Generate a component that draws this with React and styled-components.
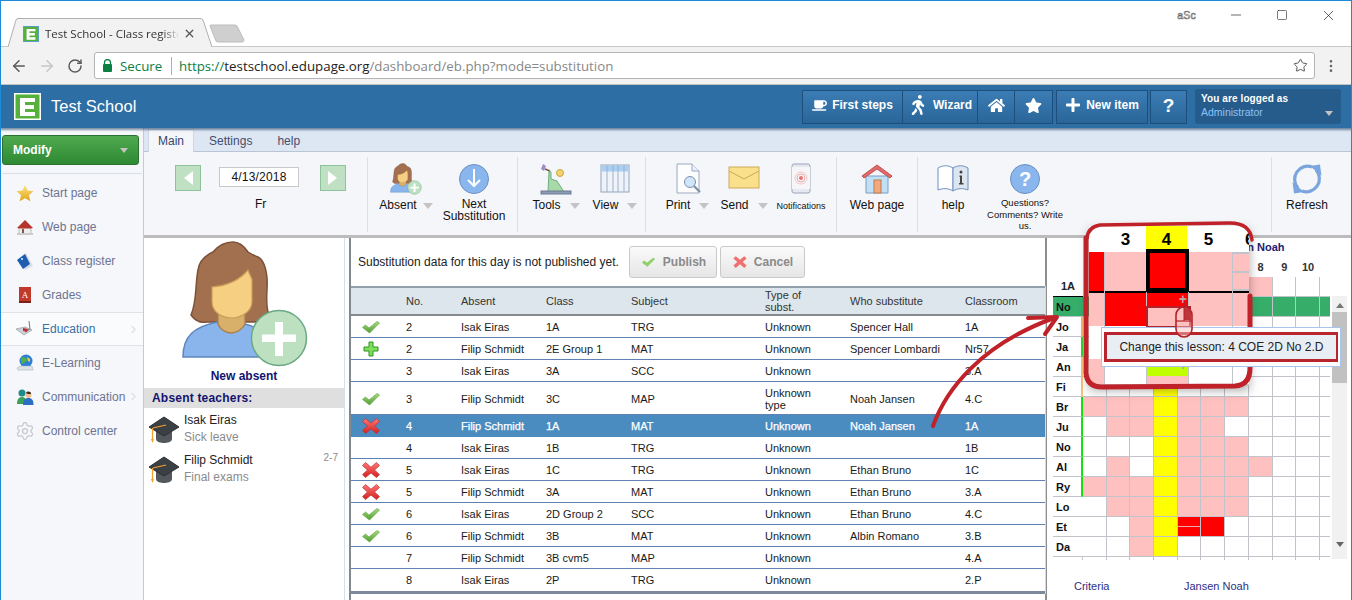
import React from 'react';
import styled, { createGlobalStyle, css } from 'styled-components';
import { ArrowLeft, ArrowRight, RotateCw, Star, MoreVertical, Minus, Square, X, Settings, ChevronRight } from 'lucide-react';
import { FaCoffee, FaHome, FaStar, FaPlus, FaWalking } from 'react-icons/fa';

const Global = createGlobalStyle`
  html, body { margin: 0; padding: 0; background: #fff; overflow: hidden; }
  * { box-sizing: border-box; }
  body { font-family: "Liberation Sans", Arial, sans-serif; font-size: 12px; color: #111; }
`;

const Frame = styled.div`
  position: relative; width: 1352px; height: 600px; overflow: hidden; display: flex; flex-direction: column;
  &::after { content: ''; position: absolute; inset: 0; border: 1px solid #1b8bd6; border-bottom: 0; border-top-width: 1px; pointer-events: none; z-index: 50; }
`;

/* ---------- browser chrome ---------- */
const TabStrip = styled.div`
  height: 47px; flex: none; display: flex; align-items: flex-end; padding-left: 8px; background: #fff; position: relative; border-bottom: 1px solid #c8c8c8;
`;
const Tab = styled.div`
  position: relative; width: 204px; height: 29px; margin-bottom: -1px; display: flex; align-items: center; padding: 2px 0 0 15px; z-index: 1;
`;
const TabShape = styled.svg`position: absolute; inset: 0; width: 204px; height: 29px; z-index: -1;`;
const TabTitle = styled.span`
  font: 11.500px "Open Sans", "Noto Sans", sans-serif; color: #333; margin-left: 6px; width: 134px; white-space: nowrap; overflow: hidden;
  -webkit-mask-image: linear-gradient(90deg, #000 88%, transparent);
`;
const TabClose = styled(X)`margin-left: 4px; color: #555;`;
const NewTab = styled.svg`width: 36px; height: 19px; margin: 0 0 3px -3px;`;
const WinControls = styled.div`
  position: absolute; top: 5px; right: 1px; display: flex; align-items: center; height: 20px; color: #222;
`;
const Asc = styled.span`font: 10.500px "Liberation Sans", sans-serif; color: #fff; -webkit-text-stroke: 0.6px #666; margin-right: 17px; letter-spacing: .2px;`;
const WinBtn = styled.span`width: 46px; display: flex; justify-content: center;`;

const Toolbar = styled.div`
  height: 38px; flex: none; background: #f2f2f2; border-bottom: 1px solid #c3c3c3; display: flex; align-items: center; padding-left: 5px;
`;
const NavBtn = styled.span`width: 28px; display: flex; justify-content: center; color: ${p => p.$off ? '#c6c6c6' : '#5a5a5a'};`;
const Address = styled.div`
  margin-left: 5px; width: 1221px; height: 27px; background: #fff; border: 1px solid #b4b4b4; border-radius: 3px; display: flex; align-items: center; padding: 0 6px 0 7px;
  font: 14px "Open Sans", "Noto Sans", sans-serif;
`;
const Secure = styled.span`color: #0b8043; margin-left: 7px; width: 51px; font-size: 13.300px;`;
const UrlSep = styled.span`width: 1px; height: 18px; background: #b0b0b0; margin-right: 7px;`;
const Url = styled.span`color: #0b8043; white-space: nowrap; flex: 1; font-size: 13.300px;`;
const UrlHost = styled.span`color: #222;`;
const UrlPath = styled.span`color: #888;`;
const Kebab = styled.span`margin-left: 8px; color: #666; display: flex;`;

/* ---------- blue header ---------- */
const Header = styled.header`
  height: 43px; flex: none; background: #2d6ea4; display: flex; align-items: center; padding: 0 11px 0 14px; box-shadow: 0 2px 2px rgba(0,40,80,.5); position: relative; z-index: 3;
`;
const Logo = styled.svg`width: 27px; height: 27px; flex: none;`;
const SchoolName = styled.div`color: #fff; font-size: 16.500px; margin-left: 10px; flex: 1;`;
const HeadGroup = styled.div`display: flex; margin-left: ${p => p.$gap || 0}px;`;
const HeadBtn = styled.div`
  width: ${p => p.$w}px; height: 34px; display: flex; align-items: center; justify-content: center; gap: 5px; padding-bottom: 3px;
  background: linear-gradient(#3b7db5, #2a6598); border: 1px solid #1e4f7c; margin-left: -1px; color: #fff; font-weight: bold; font-size: 12px;
`;
const HeadQ = styled.span`font-size: 19px; line-height: 19px;`;
const Login = styled.div`
  width: 146px; height: 35px; margin-left: 8px; background: #255c8b; border-radius: 3px; padding: 3px 6px; position: relative; line-height: 14px; font-size: 10px;
  color: #fff; font-weight: bold; letter-spacing: .1px;
`;
const LoginName = styled.div`color: #8ec2f5; font-weight: normal; font-size: 10.500px; line-height: 13px; letter-spacing: 0;`;
const Caret = styled.span`
  display: inline-block; border-left: ${p => p.$s || 4}px solid transparent; border-right: ${p => p.$s || 4}px solid transparent; border-top: ${p => (p.$s || 4) + 1}px solid ${p => p.$c || '#c4c4c4'};
`;
const LoginCaret = styled(Caret)`position: absolute; right: 8px; bottom: 8px;`;

/* ---------- body ---------- */
const Body = styled.div`flex: 1; display: flex; min-height: 0;`;
const Sidebar = styled.nav`width: 144px; flex: none; background: #f5f7fa; border-right: 1px solid #c6cbd2; padding-top: 7px;`;
const ModifyBtn = styled.div`
  margin-left: 2px; width: 137px; height: 30px; border-radius: 3px; border: 1px solid #2a7030; background: linear-gradient(#4fa94f, #2d8a33);
  color: #fff; font-weight: bold; font-size: 12px; display: flex; align-items: center; justify-content: space-between; padding: 0 10px 0 10px;
`;
const SideDivider = styled.div`height: 1px; background: #d8dfe6; margin: 8px 1px 2px 2px;`;
const SideItem = styled.div`
  height: 34px; display: flex; align-items: center; padding-left: 15px; color: #6d7392; font-size: 12px; position: relative;
  ${p => p.$active && css`background: #fafbfc; color: #3a6fa5; border-top: 1px solid #dfe3e8; border-bottom: 1px solid #dfe3e8;`}
`;
const SideIcon = styled.svg`width: 20px; height: 20px; flex: none; margin-right: 7px;`;
const Chevron = styled(ChevronRight)`position: absolute; right: 3px; top: 10px; color: #dcdfe3;`;

const Main = styled.div`flex: 1; display: flex; flex-direction: column; min-width: 0;`;
const RibbonTabs = styled.div`height: 24px; flex: none; background: #dde6f3; border-bottom: 1px solid #b9c4d4; display: flex; padding-left: 4px; align-items: flex-end;`;
const RibbonTab = styled.div`
  height: 23px; margin-bottom: -1px; padding: 0 ${p => p.$pad}px; display: flex; align-items: center; color: #444e6e; font-size: 12px;
  ${p => p.$active && css`background: #f5f6f9; border: 1px solid #cfd7e3; border-bottom: 0; color: #33466e;`}
`;
const Ribbon = styled.div`height: 86px; flex: none; background: #f5f6f9; border-bottom: 3px solid #bcbcbc; display: flex; padding: 5px 0 0;`;
const RGroup = styled.div`
  width: ${p => p.$w}px; flex: none; height: 75px; display: flex; padding-left: ${p => p.$pad || 0}px;
  border-right: ${p => p.$last ? 0 : '1px solid #dedfe3'};
`;
const DateGroup = styled.div`display: grid; grid-template-columns: 44px 101px 26px; padding: 8px 0 0 31px; justify-items: start; align-content: start;`;
const DateArrow = styled.div`width: 26px; height: 26px; background: #bfe0c2; border: 1px solid #8dc29a; display: flex; align-items: center; justify-content: center;`;
const DateBox = styled.div`width: 80px; height: 20px; margin-top: 2px; background: #fff; border: 1px solid #c9c9c9; text-align: center; line-height: 18px; font-size: 12px; letter-spacing: .2px;`;
const DayLabel = styled.div`grid-column: 2; margin: 6px 0 0 36px; font-size: 12px;`;
const RItem = styled.div`width: ${p => p.$w}px; flex: none; display: flex; flex-direction: column; align-items: center; padding-top: 6px;`;
const RIcon = styled.svg`width: 34px; height: 32px; flex: none;`;
const RLabel = styled.div`
  margin-top: ${p => p.$mt ?? 5}px; font-size: ${p => p.$fs || 12}px; line-height: ${p => p.$lh || 11}px; text-align: center; color: #111; display: flex; align-items: center; gap: ${p => p.$gap || 9}px; white-space: nowrap;
  ${p => p.$block && 'display: block;'}
`;
const Spacer = styled.div`flex: 1;`;

const Content = styled.div`flex: 1; display: flex; min-height: 0;`;
const LeftPanel = styled.aside`width: 201px; flex: none; border-right: 1px solid #d5dfe8; display: flex; flex-direction: column;`;
const BigAvatar = styled.svg`width: 130px; height: 128px; margin: 2px 0 0 36px; flex: none;`;
const NewAbsent = styled.div`text-align: center; font-weight: bold; color: #14146e; font-size: 12px; line-height: 14px; margin-top: 1px;`;
const AbsentHead = styled.div`height: 20px; margin-top: 5px; background: #dfdfdf; color: #14146e; font-weight: bold; padding-left: 8px; line-height: 20px; font-size: 12px; letter-spacing: .2px;`;
const Teacher = styled.div`height: 40px; display: flex; padding: 4px 0 0 4px; position: relative;`;
const Hat = styled.svg`width: 32px; height: 30px; margin-top: 3px; flex: none;`;
const TeacherText = styled.div`margin-left: 4px; line-height: 17px; font-size: 12px; color: #222;`;
const Reason = styled.div`color: #8b8b8b;`;
const Range = styled.span`position: absolute; right: 6px; top: 4px; font-size: 10px; color: #8b8b8b;`;

const Center = styled.section`width: 702px; flex: none; padding-left: 4px; display: flex; flex-direction: column; border-right: 2px solid #8e8e8e;`;
const CenterInner = styled.div`flex: 1; border-left: 2px solid #808890; padding-left: 0; display: flex; flex-direction: column;`;
const PublishBar = styled.div`height: 48px; flex: none; display: flex; align-items: flex-start; padding: 8px 0 0 7px; font-size: 12px; color: #222;`;
const PublishText = styled.span`line-height: 32px; width: 271px;`;
const GreyBtn = styled.div`
  width: ${p => p.$w}px; height: 32px; margin-right: 3px; display: flex; align-items: center; justify-content: center; gap: 6px;
  border: 1px solid #c9c9c9; border-radius: 3px; background: linear-gradient(#fafafa, #e6e6e6); color: #8a8a8a; font-weight: bold; font-size: 12px;
`;
const Table = styled.table`width: 694px; table-layout: fixed; border-collapse: separate; border-spacing: 0; font-size: 11px; border-right: 1px solid #cfdbe6;`;
const Th = styled.th`
  height: 30px; background: #dde6ec; font-weight: normal; text-align: left; padding: 0; line-height: 12px; color: #333; border-top: 2px solid #92a0ac; border-bottom: 2px solid #858a8e;
`;
const Td = styled.td`
  padding: ${p => p.$h === 33 ? '2px' : '0'} 0 0; height: ${p => p.$h}px; line-height: 12px; color: ${p => p.$sel ? '#fff' : '#1a1a1a'};
  ${p => p.$sel && '-webkit-text-stroke: 0.25px #fff;'}
  background: ${p => p.$sel ? '#4a8bc0' : '#fff'}; border-bottom: ${p => p.$last ? '3px solid #7c8a9c' : p.$sel ? '0' : '1px solid #5f82b2'};
  text-align: left;
`;
const StatusIcon = styled.svg`display: block; width: 20px; height: 18px; margin: 0 0 0 10px;`;

const RightPanel = styled.section`flex: 1; padding-left: 6px; position: relative;`;
const PlanTitle = styled.div`height: 19px; padding: 3px 0 0 163px; font-weight: bold; color: #22226e; font-size: 11px; white-space: nowrap;`;
const PlanWrap = styled.div`display: flex; align-items: flex-start;`;
const Plan = styled.div`width: 277px; overflow: hidden; flex: none;`;
const PlanRow = styled.div`display: grid; grid-template-columns: 30px repeat(11, 23.7px); grid-template-rows: ${p => p.$h || 20}px; height: ${p => p.$h || 20}px; ${p => p.$black && 'border-bottom: 1px solid #000;'}`;
const RowLabel = styled.div`
  height: 20px; font-weight: bold; font-size: 11px; line-height: 21px; padding-left: 3px; color: #111; border-bottom: 1px solid #c2c2ca; position: relative;
  background: ${p => p.$green ? '#36ae6a' : 'transparent'};
  ${p => p.$ind && css`border-right: 2px solid ${p.$ind};`}
`;
const colors = { w: '#fff', p: '#ffc0c0', y: '#ffff00', r: '#ff0000', g: '#36ae6a', R: '#ff0000' };
const Cell = styled.div`
  border-right: 1px solid #c2c2ca; border-bottom: 1px solid #c2c2ca; background: ${p => colors[p.$c]};
  ${p => p.$c === 'R' && 'background: linear-gradient(#f00 47%, #eaa 47%, #eaa 53%, #f00 53%);'}
`;
const NumCell = styled.div`font-weight: bold; font-size: 11px; text-align: center; color: #333; line-height: 20px;`;
const OneA = styled.div`font-weight: bold; font-size: 11px; text-align: center; line-height: 19px; color: #222;`;
const TickCell = styled.div`height: 3px; border-right: 1px solid #c2c2ca;`;
const Scroll = styled.div`width: 15px; height: 263px; margin: 39px 0 0 2px; background: #f1f1f1; display: flex; flex-direction: column; align-items: center; padding-top: 7px; flex: none;`;
const ScrollThumb = styled.div`width: 15px; height: 71px; background: #c1c1c1; margin-top: 4px;`;
const ScrollUp = styled.div`border-left: 4px solid transparent; border-right: 4px solid transparent; border-bottom: 5px solid #777;`;
const ScrollDown = styled.div`border-left: 4px solid transparent; border-right: 4px solid transparent; border-top: 5px solid #666; margin-top: 159px;`;
const Criteria = styled.div`display: grid; grid-template-columns: 110px 1fr; padding: 19px 0 0 21px; font-size: 11px; color: #2b2f85; line-height: 15px; row-gap: 3px;`;
const CriteriaMuted = styled.span`color: #777;`;

/* ---------- annotation overlay ---------- */
const Callout = styled.div`
  position: absolute; left: 1089px; top: 226px; width: 160px; height: 160px; background: #fff; box-shadow: 0 4px 10px rgba(0,0,0,.35); z-index: 10; overflow: visible;
`;
const ZoomHead = styled.div`
  display: grid; grid-template-columns: 16px 41px 41px 43px 19px; height: 26px; font-weight: bold; font-size: 17px; text-align: center; line-height: 27px; color: #000;
`;
const ZoomHeadCell = styled.div`background: ${p => p.$y ? '#ffff00' : '#fff'}; overflow: hidden; ${p => p.$clip && 'text-align: left; padding-left: 15px;'}`;
const ZoomGrid = styled.div`
  display: grid; grid-template-columns: 15px 41px 41px 43px 16px; column-gap: 1px; background: #c2c2ca; width: 160px;
  grid-template-rows: 39px 35px 33px 17px 8px; height: 134px; row-gap: 0; position: relative;
`;
const ZCell = styled.div`
  background: ${p => ({ r: '#ff0000', p: '#ffc0c0', w: '#fff', l: '#bfff00' })[p.$c]}; position: relative;
  grid-row: ${p => p.$row}; grid-column: ${p => p.$col};
  ${p => p.$sel && 'box-shadow: 0 0 0 4px #000; outline: 0; z-index: 2; margin: 1px 3px 3px 3px;'}
  ${p => p.$top && 'border-top: 2px solid #000;'}
`;
const ZSplit = styled.div`grid-row: 1; grid-column: 5; display: grid; grid-template-rows: 1fr 1fr; row-gap: 2px; background: #c2c2ca; padding: 2px 0 2px;`;
const ZPink = styled.div`background: #ffc0c0;`;
const ZPlus = styled.span`position: absolute; right: 1px; top: -1px; font-weight: bold; font-size: 14px; color: #b9a9a9; line-height: 14px;`;
const ZRedTop = styled.div`height: 13px; background: #f00; position: relative;`;
const ZPinkOut = styled.div`height: 22px; background: #ffc0c0; border: 2px solid #b2222a; margin: 0 -3px 0 -1px; position: relative; z-index: 3;`;
const ZLime = styled.div`background: #bfff00; height: 100%; position: relative;`;
const CalloutRing = styled.svg`position: absolute; left: 1080px; top: 218px; width: 180px; height: 175px; z-index: 12; pointer-events: none;`;
const Tip = styled.div`
  position: absolute; left: 1101px; top: 327px; width: 240px; height: 40px; background: #fff; border: 1px solid #a9c5ee; padding: 4px 2px; z-index: 13;
`;
const TipInner = styled.div`
  height: 30px; background: #e9edf4; border: 3px solid #b9252c; border-left-width: 3px; border-right-width: 2px; text-align: center; line-height: 24px; font-size: 12px; color: #222; white-space: nowrap;
`;
const MouseIcon = styled.svg`position: absolute; left: 1174px; top: 300px; width: 20px; height: 38px; z-index: 14;`;
const ArrowSvg = styled.svg`position: absolute; left: 920px; top: 305px; width: 150px; height: 130px; z-index: 9; pointer-events: none;`;

/* ---------- drawings ---------- */
const ELogo = ({ size, edge = '#fff' }) => (
  <Logo viewBox="0 0 27 27" style={size ? { width: size, height: size } : undefined}>
    <rect width="27" height="27" fill={edge} />
    <rect x="1.500" y="1.500" width="24" height="24" fill="#55b13b" />
    <path d="M6 5h15v4H11v3h9v4h-9v3h10v4H6z" fill="#fff" />
  </Logo>
);
const Check = () => (
  <StatusIcon viewBox="0 0 20 18">
    <defs><linearGradient id="ck" x1="0" y1="0" x2="0" y2="1"><stop offset="0" stopColor="#a8dc82" /><stop offset="1" stopColor="#4f9e2f" /></linearGradient></defs>
    <path d="M1.500 9.500l3-2.500 3.500 3 8-6.500 2.500 1.500L8.500 15z" fill="url(#ck)" stroke="#6aa84f" strokeWidth=".7" />
  </StatusIcon>
);
const Cross = () => (
  <StatusIcon viewBox="0 0 20 18">
    <defs><linearGradient id="crs" x1="0" y1="0" x2="0" y2="1"><stop offset="0" stopColor="#f77" /><stop offset="1" stopColor="#d51f1f" /></linearGradient></defs>
    <path d="M4.500 1.500l5.500 4.700 5.500-4.700 3 3L13.500 9l5 4.600-3 3L10 12l-5.500 4.600-3-3L6.500 9l-5-4.500z" fill="url(#crs)" stroke="#b83030" strokeWidth=".7" />
  </StatusIcon>
);
const PlusIcon = () => (
  <StatusIcon viewBox="0 0 20 18">
    <path d="M8 2h4v5h5v4h-5v5H8v-5H3V7h5z" fill="#7ee05a" stroke="#2f9425" strokeWidth="1" />
  </StatusIcon>
);
const GradHat = () => (
  <Hat viewBox="0 0 32 30">
    <path d="M8 15v9c0 3 5 4 8 4s8-1 8-4v-9z" fill="#54585c" />
    <path d="M1 12L16 2l15 10-15 9z" fill="#3b4045" stroke="#2c3034" />
    <path d="M5 13l13-3" stroke="#f0a030" strokeWidth="1.200" fill="none" />
    <path d="M4.500 13v13" stroke="#f0a030" strokeWidth="1.300" /><path d="M3 24h3l-1.500 4z" fill="#f0a030" />
  </Hat>
);
const Avatar = () => (
  <>
    <path d="M53 2C44 2 38 6 33 12C24 16 19 22 18 30C15 45 17 62 11 75C16 82 22 83 27 82L80 82L88 72C85 60 88 48 87 38C86 28 84 20 78 17C73 15 71 14 68 12C64 6 60 2 53 2Z" fill="#a26f4f" stroke="#7c5238" strokeWidth="1.500" />
    <path d="M3 117C3 96 14 87 37 82C42 92 60 94 65 84C78 87 88 94 93 117Z" fill="#89b4ec" stroke="#5f86bd" strokeWidth="1.500" />
    <path d="M38 72V84C41 91 48 93 51 93C56 93 62 90 65 84V72Z" fill="#d9b06a" stroke="#a9804a" strokeWidth="1.300" />
    <path d="M32 47C44 46 58 42 68 30C70 36 72 38 72 40V62C72 72 60 78 52 78C42 78 32 72 32 62Z" fill="#f6cf82" stroke="#c99f56" strokeWidth="1.200" />
    <circle cx="99" cy="98" r="27.500" fill="#bce0c0" stroke="#6aa984" strokeWidth="1.500" />
    <path d="M95 82h8v12.500h13v7.500h-13v14h-8v-14H82v-7.500h13z" fill="#fff" />
  </>
);

const sideIcons = {
  star: <><defs><linearGradient id="st" x1="0" y1="0" x2="0" y2="1"><stop offset="0" stopColor="#ffe27a" /><stop offset="1" stopColor="#e0a520" /></linearGradient></defs><path d="M10 2l2.500 5.500 6 .7-4.500 4 1.300 6-5.300-3-5.300 3 1.300-6-4.500-4 6-.7z" fill="url(#st)" /></>,
  house: <><path d="M4 10h12v7H4z" fill="#eee" stroke="#999" strokeWidth=".6" /><path d="M2 11L10 3l8 8-3 .5H5z" fill="#b5342c" /><path d="M7 12h2v5H7z" fill="#7a5a4a" /><path d="M2 16h16v2H2z" fill="#ccc" /></>,
  book: <><path d="M3 8l8-6 7 13-8 4z" fill="#d8dee6" /><path d="M2 9l8-6 5 10-7 5z" fill="#1e5cb0" /><circle cx="7" cy="8" r="1" fill="#cfe" /></>,
  grades: <><rect x="4" y="2" width="12" height="16" fill="#c0392b" /><rect x="4" y="16" width="12" height="2" fill="#7d1f16" /><text x="10" y="13" fontSize="9" textAnchor="middle" fill="#fff" fontFamily="Liberation Serif">A</text></>,
  edu: <><path d="M1 10l9-2 7 3-8 5z" fill="#cfd3d8" stroke="#8a8f96" strokeWidth=".6" /><path d="M14 2l1 8-5 3" stroke="#777" fill="none" /><path d="M8 9l5 1-1 3-4-1z" fill="#c0303c" /></>,
  globe: <><circle cx="11" cy="8" r="6.500" fill="#2f7fd6" /><path d="M7 4c3 0 5 1 5 3s-3 2-4 4c-2 0-3-5-1-7z" fill="#4caf50" /><path d="M12 4l3 2v3l-2-1z" fill="#f0d040" /><path d="M2 15l4-2h11l1 4H3z" fill="#dfe3e8" stroke="#9aa" strokeWidth=".5" /></>,
  people: <><circle cx="7" cy="6" r="3.500" fill="#1f8a8a" /><path d="M2 17c0-5 2-7 5-7s5 2 5 7z" fill="#3aa05a" /><circle cx="13.500" cy="8" r="3" fill="#f0c090" /><path d="M8 18c0-5 2-7 5.500-7s5 2 5 7z" fill="#2a6fc0" /><path d="M11 6c1-2 5-2 5 1-2 0-4 0-5-1z" fill="#3b2a20" /></>,
};

const TimetableRows = [
  ['No', 'ggggggggggg', null, true],
  ['Jo', 'wwwywwwwwww', '#f6b26b'],
  ['Ja', 'wwwywwwwwww', '#31d631'],
  ['An', 'wwwywwwwwww', '#f6c27b'],
  ['Fi', 'wwwywwwwwww', '#f6c27b'],
  ['Br', 'pppypppwwww', '#14e014'],
  ['Ju', 'wppyppwwwww', '#14e014'],
  ['No', 'wwwypppwwww', '#14e014'],
  ['Al', 'wpwyppppwww', '#14e014'],
  ['Ry', 'pppypppwwww', '#14e014'],
  ['Lo', 'wppypppwwww'],
  ['Et', 'wwpyRrwwwww'],
  ['Da', 'wwpywwwwwww'],
];

const Rows = [
  ['c', '2', 'Isak Eiras', '1A', 'TRG', 'Unknown', 'Spencer Hall', '1A'],
  ['+', '2', 'Filip Schmidt', '2E Group 1', 'MAT', 'Unknown', 'Spencer Lombardi', 'Nr57'],
  ['', '3', 'Isak Eiras', '3A', 'SCC', 'Unknown', '', '3.A'],
  ['c', '3', 'Filip Schmidt', '3C', 'MAP', 'Unknown type', 'Noah Jansen', '4.C', 33],
  ['x', '4', 'Filip Schmidt', '1A', 'MAT', 'Unknown', 'Noah Jansen', '1A', 22, true],
  ['', '4', 'Isak Eiras', '1B', 'TRG', 'Unknown', '', '1B'],
  ['x', '5', 'Isak Eiras', '1C', 'TRG', 'Unknown', 'Ethan Bruno', '1C'],
  ['x', '5', 'Filip Schmidt', '3A', 'MAT', 'Unknown', 'Ethan Bruno', '3.A'],
  ['c', '6', 'Isak Eiras', '2D Group 2', 'SCC', 'Unknown', 'Ethan Bruno', '4.C'],
  ['c', '6', 'Filip Schmidt', '3B', 'MAT', 'Unknown', 'Albin Romano', '3.B'],
  ['', '7', 'Filip Schmidt', '3B cvm5', 'MAP', 'Unknown', '', '4.A'],
  ['', '8', 'Isak Eiras', '2P', 'TRG', 'Unknown', '', '2.P', 25],
];
const colWidths = [55, 55, 85, 85, 134, 85, 115, 80];

export default function App() {
  return (
    <Frame>
      <Global />
      <TabStrip>
        <Tab>
          <TabShape viewBox="0 0 204 29"><path d="M0 29 L8 2 Q8.500 .5 10 .5 H192 Q194 .5 195 2 L204 29" fill="#f2f2f2" stroke="#b0b0b0" /></TabShape>
          <ELogo size={16} edge="#5b9bd5" />
          <TabTitle>Test School - Class register</TabTitle>
          <TabClose size={13} strokeWidth={2.4} />
        </Tab>
        <NewTab viewBox="0 0 36 19"><path d="M1 2q0-1 1-1h24q1 0 2 1l7 14q0 2-2 2H9q-1 0-2-1z" fill="#cfcfcf" stroke="#bdbdbd" /></NewTab>
        <WinControls>
          <Asc>aSc</Asc>
          <WinBtn><Minus size={16} strokeWidth={1} /></WinBtn>
          <WinBtn><Square size={12} strokeWidth={1.2} /></WinBtn>
          <WinBtn><X size={17} strokeWidth={1} /></WinBtn>
        </WinControls>
      </TabStrip>
      <Toolbar>
        <NavBtn><ArrowLeft size={18} strokeWidth={2} /></NavBtn>
        <NavBtn $off><ArrowRight size={18} strokeWidth={2} /></NavBtn>
        <NavBtn><RotateCw size={16} strokeWidth={2.2} /></NavBtn>
        <Address>
          <svg width="11" height="13" viewBox="0 0 11 13"><path d="M2.500 5V3.500a3 3 0 016 0V5" fill="none" stroke="#0b8043" strokeWidth="1.300" /><rect x="1" y="5" width="9" height="8" rx="1" fill="#0b8043" /></svg>
          <Secure>Secure</Secure>
          <UrlSep />
          <Url>https://<UrlHost>testschool.edupage.org</UrlHost><UrlPath>/dashboard/eb.php?mode=substitution</UrlPath></Url>
          <Star size={15} strokeWidth={1.6} color="#555" />
        </Address>
        <Kebab><MoreVertical size={16} strokeWidth={2} /></Kebab>
      </Toolbar>
      <Header>
        <ELogo />
        <SchoolName>Test School</SchoolName>
        <HeadGroup>
          <HeadBtn $w={101}><FaCoffee size={15} />First steps</HeadBtn>
          <HeadBtn $w={76}><FaWalking size={20} />Wizard</HeadBtn>
          <HeadBtn $w={38}><FaHome size={17} /></HeadBtn>
          <HeadBtn $w={39}><FaStar size={17} /></HeadBtn>
        </HeadGroup>
        <HeadGroup $gap={4}>
          <HeadBtn $w={92}><FaPlus size={16} />New item</HeadBtn>
        </HeadGroup>
        <HeadGroup $gap={3}>
          <HeadBtn $w={37}><HeadQ>?</HeadQ></HeadBtn>
        </HeadGroup>
        <Login>
          You are logged as
          <LoginName>Administrator</LoginName>
          <LoginCaret />
        </Login>
      </Header>
      <Body>
        <Sidebar>
          <ModifyBtn>Modify <Caret /></ModifyBtn>
          <SideDivider />
          <SideItem><SideIcon viewBox="0 0 20 20">{sideIcons.star}</SideIcon>Start page</SideItem>
          <SideItem><SideIcon viewBox="0 0 20 20">{sideIcons.house}</SideIcon>Web page</SideItem>
          <SideItem><SideIcon viewBox="0 0 20 20">{sideIcons.book}</SideIcon>Class register</SideItem>
          <SideItem><SideIcon viewBox="0 0 20 20">{sideIcons.grades}</SideIcon>Grades</SideItem>
          <SideItem $active><SideIcon viewBox="0 0 20 20">{sideIcons.edu}</SideIcon>Education<Chevron size={13} /></SideItem>
          <SideItem><SideIcon viewBox="0 0 20 20">{sideIcons.globe}</SideIcon>E-Learning</SideItem>
          <SideItem><SideIcon viewBox="0 0 20 20">{sideIcons.people}</SideIcon>Communication<Chevron size={13} /></SideItem>
          <SideItem><SideIcon as={Settings} size={20} color="#c4c7cc" strokeWidth={1.5} />Control center</SideItem>
        </Sidebar>
        <Main>
          <RibbonTabs>
            <RibbonTab $active $pad={9}>Main</RibbonTab>
            <RibbonTab $pad={15}>Settings</RibbonTab>
            <RibbonTab $pad={10}>help</RibbonTab>
          </RibbonTabs>
          <Ribbon>
            <RGroup $w={224}>
              <DateGroup>
                <DateArrow><svg width="10" height="14"><path d="M10 0v14L1 7z" fill="#fff" /></svg></DateArrow>
                <DateBox>4/13/2018</DateBox>
                <DateArrow><svg width="10" height="14"><path d="M0 0v14l9-7z" fill="#fff" /></svg></DateArrow>
                <DayLabel>Fr</DayLabel>
              </DateGroup>
            </RGroup>
            <RGroup $w={150} $pad={3}>
              <RItem $w={70}>
                <RIcon viewBox="0 0 130 128"><Avatar /></RIcon>
                <RLabel $gap={6}>Absent <Caret $s={5} /></RLabel>
              </RItem>
              <RItem $w={66}>
                <RIcon viewBox="0 0 32 32"><circle cx="16" cy="16" r="14.500" fill="#8ab6ee" stroke="#6b8fc2" /><path d="M16 6v17M10 17l6 6 6-6" stroke="#fff" strokeWidth="2" fill="none" /></RIcon>
                <RLabel $mt={3} $lh={12} $block>Next<br />Substitution</RLabel>
              </RItem>
            </RGroup>
            <RGroup $w={128} $pad={8}>
              <RItem $w={60}>
                <RIcon viewBox="0 0 32 32"><path d="M3 1l3 2-2 5-3-2z" fill="#a58ac9" /><path d="M5 6l5 2" stroke="#7a5a3a" strokeWidth="1.500" /><circle cx="20" cy="10" r="3.500" fill="#f3d36b" stroke="#c7a63e" /><path d="M9 8l2 1v7l6 2 7 11H8z" fill="#a9d9a9" stroke="#6fae7f" /><rect x="1" y="28" width="30" height="3" fill="#8a9bb5" stroke="#6b7a90" /></RIcon>
                <RLabel>Tools <Caret $s={5} /></RLabel>
              </RItem>
              <RItem $w={58}>
                <RIcon viewBox="0 0 32 32"><rect x="2" y="2" width="28" height="27" fill="#eef3fa" stroke="#93a4bc" /><rect x="2.500" y="2.500" width="27" height="6" fill="#a9d0f2" /><path d="M8 2v27M14 2v27M19 2v27M25 2v27" stroke="#9fb0c6" /></RIcon>
                <RLabel>View <Caret $s={5} /></RLabel>
              </RItem>
            </RGroup>
            <RGroup $w={191} $pad={13}>
              <RItem $w={57}>
                <RIcon viewBox="0 0 32 32"><path d="M5 1h15l7 7v22H5z" fill="#fdfdfd" stroke="#9aa9bf" /><path d="M20 1v7h7" fill="#eef" stroke="#9aa9bf" /><circle cx="18" cy="19" r="5.500" fill="#cfe5fb" stroke="#7d8fa8" /><path d="M22 23l6 6" stroke="#7d8fa8" strokeWidth="2.200" /></RIcon>
                <RLabel>Print <Caret $s={5} /></RLabel>
              </RItem>
              <RItem $w={56}>
                <RIcon viewBox="0 0 32 32"><rect x="1" y="4" width="30" height="21" fill="#fbe08b" stroke="#c9a95a" /><path d="M1 8l15 8 15-8" fill="none" stroke="#c9a95a" /></RIcon>
                <RLabel>Send <Caret $s={5} /></RLabel>
              </RItem>
              <RItem $w={58}>
                <RIcon viewBox="0 0 32 32"><rect x="7" y="1" width="18" height="29" rx="2" fill="#e6e9f0" stroke="#9aa5b6" /><rect x="7" y="4" width="18" height="22" fill="#f6f6f8" /><circle cx="16" cy="15" r="2" fill="#e57373" /><circle cx="16" cy="15" r="4" fill="none" stroke="#eaa" /><circle cx="16" cy="15" r="6" fill="none" stroke="#f3c6c6" /></RIcon>
                <RLabel $mt={6} $fs={9}>Notifications</RLabel>
              </RItem>
            </RGroup>
            <RGroup $w={81}>
              <RItem $w={80}>
                <RIcon viewBox="0 0 32 32"><path d="M5 13h22v17H5z" fill="#bfe0f5" stroke="#7d9cc0" /><path d="M1 13L16 2l15 11-2 2L16 6 3 15z" fill="#e26a6a" stroke="#c05050" /><rect x="13" y="17" width="7" height="13" fill="#f2a97c" stroke="#c07a50" /></RIcon>
                <RLabel>Web page</RLabel>
              </RItem>
            </RGroup>
            <RGroup $w={354}>
              <RItem $w={70}>
                <RIcon viewBox="0 0 32 32"><path d="M1 5c5-3 10-3 15 0v23C11 25 6 25 1 27z" fill="#fff" stroke="#6f8fbf" /><path d="M16 5c5-3 10-3 15 0v22c-5-2-10-2-15 1z" fill="#dce6f1" stroke="#6f8fbf" /><circle cx="24" cy="9" r="1.500" fill="#444" /><path d="M22.500 12.500h2.500V20h1.500v1.500h-4.500V20h1v-6h-.5z" fill="#444" /></RIcon>
                <RLabel>help</RLabel>
              </RItem>
              <RItem $w={74}>
                <RIcon viewBox="0 0 32 32"><circle cx="16" cy="16" r="14.500" fill="#8ab6ee" stroke="#6b8fc2" /><text x="16" y="23" textAnchor="middle" fontSize="20" fill="#fff" fontFamily="Liberation Sans" fontWeight="bold">?</text></RIcon>
                <RLabel $mt={2} $fs={9.500} $lh={11.500} $block>Questions?<br />Comments? Write<br />us.</RLabel>
              </RItem>
              <Spacer />
            </RGroup>
            <RGroup $w={80} $last>
              <RItem $w={70}>
                <RIcon viewBox="0 0 32 32">
                  <g fill="none" strokeWidth="3.200" stroke="#7ba5dd">
                    <path d="M21 4A13 13 0 0 0 7 25" />
                    <path d="M11 28A13 13 0 0 0 25 7" />
                  </g>
                  <path d="M1.500 19L3 30.500 13 29z" fill="#7ba5dd" />
                  <path d="M30.500 13L29 1.500 19 3z" fill="#7ba5dd" />
                </RIcon>
                <RLabel>Refresh</RLabel>
              </RItem>
            </RGroup>
          </Ribbon>
          <Content>
            <LeftPanel>
              <BigAvatar viewBox="0 0 130 128"><Avatar /></BigAvatar>
              <NewAbsent>New absent</NewAbsent>
              <AbsentHead>Absent teachers:</AbsentHead>
              <Teacher>
                <GradHat />
                <TeacherText>Isak Eiras<Reason>Sick leave</Reason></TeacherText>
              </Teacher>
              <Teacher>
                <GradHat />
                <TeacherText>Filip Schmidt<Reason>Final exams</Reason></TeacherText>
                <Range>2-7</Range>
              </Teacher>
            </LeftPanel>
            <Center>
              <CenterInner>
                <PublishBar>
                  <PublishText>Substitution data for this day is not published yet.</PublishText>
                  <GreyBtn $w={88}><svg width="17" height="14" viewBox="0 0 20 18"><path d="M1.500 9.500l3-2.500 3.500 3 8-6.500 2.500 1.500L8.500 15z" fill="#8fd068" /></svg>Publish</GreyBtn>
                  <GreyBtn $w={85}><svg width="16" height="14" viewBox="0 0 20 18"><path d="M4.500 1.500l5.500 4.700 5.500-4.700 3 3L13.500 9l5 4.600-3 3L10 12l-5.500 4.600-3-3L6.500 9l-5-4.500z" fill="#f07070" /></svg>Cancel</GreyBtn>
                </PublishBar>
                <Table>
                  <colgroup>{colWidths.map((w, i) => <col key={i} width={w} />)}</colgroup>
                  <thead>
                    <tr>
                      <Th /><Th>No.</Th><Th>Absent</Th><Th>Class</Th><Th>Subject</Th><Th>Type of<br />subst.</Th><Th>Who substitute</Th><Th>Classroom</Th>
                    </tr>
                  </thead>
                  <tbody>
                    {Rows.map((r, i) => {
                      const h = r[8] || 22; const sel = !!r[9]; const last = i === Rows.length - 1;
                      return (
                        <tr key={i}>
                          <Td $h={h} $sel={sel} $last={last}>{r[0] === 'c' ? <Check /> : r[0] === 'x' ? <Cross /> : r[0] === '+' ? <PlusIcon /> : null}</Td>
                          {r.slice(1, 8).map((t, j) => <Td key={j} $h={h} $sel={sel} $last={last}>{t === 'Unknown type' ? <>Unknown<br />type</> : t}</Td>)}
                        </tr>
                      );
                    })}
                  </tbody>
                </Table>
              </CenterInner>
            </Center>
            <RightPanel>
              <PlanTitle>Jansen Noah</PlanTitle>
              <PlanWrap>
                <Plan>
                  <PlanRow>
                    <div />
                    {[1, 2, 3, 4, 5, 6, 7, 8, 9, 10].map(n => <NumCell key={n}>{n}</NumCell>)}
                  </PlanRow>
                  <PlanRow $black>
                    <OneA>1A</OneA>
                    {'wwwywwwpwww'.split('').map((c, i) => <Cell key={i} $c={c} />)}
                  </PlanRow>
                  {TimetableRows.map(([name, cells, ind, green], i) => (
                    <PlanRow key={i}>
                      <RowLabel $green={green} $ind={ind}>{name}</RowLabel>
                      {cells.split('').map((c, j) => <Cell key={j} $c={c} />)}
                    </PlanRow>
                  ))}
                  <PlanRow $h={3}>
                    <TickCell />
                    {Array.from({ length: 11 }).map((_, i) => <TickCell key={i} />)}
                  </PlanRow>
                </Plan>
                <Scroll>
                  <ScrollUp />
                  <ScrollThumb />
                  <ScrollDown />
                </Scroll>
              </PlanWrap>
              <Criteria>
                <span>Criteria</span><span>Jansen Noah</span>
                <CriteriaMuted>Absent</CriteriaMuted><CriteriaMuted>Teacher/time</CriteriaMuted>
              </Criteria>
            </RightPanel>
          </Content>
        </Main>
      </Body>

      <ArrowSvg viewBox="0 0 150 130">
        <path d="M13 121C26 85 60 40 134 13" fill="none" stroke="#bf2228" strokeWidth="4" strokeLinecap="round" />
        <path d="M108 13l29-1-12 17" fill="none" stroke="#bf2228" strokeWidth="4" strokeLinecap="round" strokeLinejoin="round" />
      </ArrowSvg>
      <Callout>
        <ZoomHead>
          <ZoomHeadCell />
          <ZoomHeadCell>3</ZoomHeadCell>
          <ZoomHeadCell $y>4</ZoomHeadCell>
          <ZoomHeadCell>5</ZoomHeadCell>
          <ZoomHeadCell $clip>6</ZoomHeadCell>
        </ZoomHead>
        <ZoomGrid>
          <ZCell $c="r" $row={1} $col={1} />
          <ZCell $c="p" $row={1} $col={2} />
          <ZCell $c="r" $row={1} $col={3} $sel />
          <ZCell $c="p" $row={1} $col={4} />
          <ZSplit><ZPink /><ZPink /></ZSplit>
          <ZCell $c="p" $row={2} $col={1} $top />
          <ZCell $c="r" $row={2} $col={2} $top />
          <ZCell $c="w" $row={2} $col={3} $top>
            <ZRedTop><ZPlus>+</ZPlus></ZRedTop>
            <ZPinkOut />
          </ZCell>
          <ZCell $c="p" $row={2} $col={4} $top />
          <ZCell $c="p" $row={2} $col={5} $top />
          <ZCell $c="w" $row={3} $col={1} />
          <ZCell $c="w" $row={3} $col={2} />
          <ZCell $c="w" $row={3} $col={3} />
          <ZCell $c="w" $row={3} $col={4} />
          <ZCell $c="w" $row={3} $col={5} />
          <ZCell $c="p" $row={4} $col={1} />
          <ZCell $c="w" $row={4} $col={2} />
          <ZCell $c="l" $row={4} $col={3}><ZLime><ZPlus>+</ZPlus></ZLime></ZCell>
          <ZCell $c="w" $row={4} $col={4} />
          <ZCell $c="w" $row={4} $col={5} />
          <ZCell $c="p" $row={5} $col={1} />
          <ZCell $c="w" $row={5} $col={2} />
          <ZCell $c="p" $row={5} $col={3} />
          <ZCell $c="w" $row={5} $col={4} />
          <ZCell $c="w" $row={5} $col={5} />
        </ZoomGrid>
      </Callout>
      <CalloutRing viewBox="0 0 180 175">
        <path d="M7 20Q8 9 20 7L150 5Q170 5 172 22" fill="none" stroke="#bf2228" strokeWidth="3.500" strokeLinecap="round" />
        <path d="M170 78V150Q170 167 155 168L22 169Q7 169 6 155L6 20" fill="none" stroke="#bf2228" strokeWidth="5" strokeLinecap="round" />
      </CalloutRing>
      <Tip><TipInner>Change this lesson: 4 COE 2D No 2.D</TipInner></Tip>
      <MouseIcon viewBox="0 0 20 38">
        <path d="M11 1q-2 3 0 6" fill="none" stroke="#b2222a" strokeWidth="1.200" />
        <rect x="2" y="7" width="16" height="30" rx="8" fill="#ffc0c0" fillOpacity=".5" stroke="#b2222a" strokeWidth="1.600" />
        <path d="M10 7.500h1a7 7 0 016.500 7.500v5H10z" fill="#c0353c" />
        <path d="M2 21h16" stroke="#b2222a" strokeWidth="1.200" />
        <path d="M10 7v14" stroke="#b2222a" strokeWidth="1" />
      </MouseIcon>
    </Frame>
  );
}
